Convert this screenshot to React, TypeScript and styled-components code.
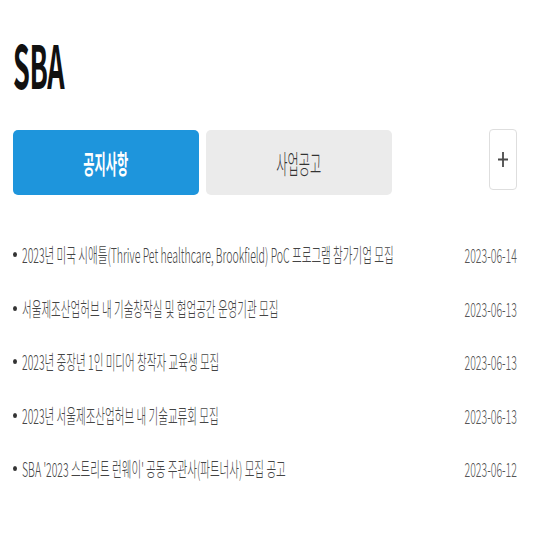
import React from "react";
import styled, { createGlobalStyle } from "styled-components";

const GlobalStyle = createGlobalStyle`
  html, body {
    margin: 0;
    padding: 0;
    background: #ffffff;
    font-family: "Noto Sans CJK KR", "Noto Sans", sans-serif;
  }
`;

const notices = [
  {
    title:
      "2023년 미국 시애틀(Thrive Pet healthcare, Brookfield) PoC 프로그램 참가기업 모집",
    date: "2023-06-14",
  },
  { title: "서울제조산업허브 내 기술창작실 및 협업공간 운영기관 모집", date: "2023-06-13" },
  { title: "2023년 중장년 1인 미디어 창작자 교육생 모집", date: "2023-06-13" },
  { title: "2023년 서울제조산업허브 내 기술교류회 모집", date: "2023-06-13" },
  { title: "SBA '2023 스트리트 런웨이' 공동 주관사(파트너사) 모집 공고", date: "2023-06-12" },
];

const App = () => {
  return (
    <Page>
      <GlobalStyle />
      <Title>
        <Squeeze $scale={0.45}>SBA</Squeeze>
      </Title>
      <TabBar>
        <Tab $active>
          <Squeeze $scale={0.47} $origin="center">공지사항</Squeeze>
        </Tab>
        <Tab>
          <Squeeze $scale={0.47} $origin="center">사업공고</Squeeze>
        </Tab>
        <MoreButton aria-label="더보기">
          <svg width="10" height="15" viewBox="0 0 10 15">
            <path d="M5 0v15M0 7.5h10" stroke="#4a4a4a" strokeWidth="1.8" fill="none" />
          </svg>
        </MoreButton>
      </TabBar>
      <List>
        {notices.map((n) => (
          <Row key={n.title}>
            <Bullet />
            <RowTitle>
              <Squeeze $scale={0.527}>{n.title}</Squeeze>
            </RowTitle>
            <RowDate>
              <Squeeze $scale={0.53} $origin="right">{n.date}</Squeeze>
            </RowDate>
          </Row>
        ))}
      </List>
    </Page>
  );
};

export default App;

const Page = styled.div`
  width: 534px;
  height: 534px;
  box-sizing: border-box;
  padding: 28px 17px 0 13px;
  overflow: hidden;
`;

const Squeeze = styled.span<{ $scale: number; $origin?: string }>`
  display: inline-block;
  white-space: nowrap;
  transform: scaleX(${(p) => p.$scale});
  transform-origin: ${(p) => p.$origin || "left"} center;
`;

const Title = styled.h1`
  margin: 0;
  font-size: 60px;
  line-height: 70px;
  font-weight: 700;
  color: #111;
  letter-spacing: -1px;
`;

const TabBar = styled.div`
  display: flex;
  align-items: flex-start;
  gap: 7px;
  margin-top: 32px;
`;

const Tab = styled.button<{ $active?: boolean }>`
  width: 186px;
  height: 65px;
  border: none;
  border-radius: 5px;
  padding: 0;
  display: flex;
  align-items: center;
  justify-content: center;
  font-family: inherit;
  font-size: 26px;
  font-weight: ${(p) => (p.$active ? 700 : 300)};
  background: ${(p) => (p.$active ? "#1e95dc" : "#ebebeb")};
  color: ${(p) => (p.$active ? "#ffffff" : "#333333")};
`;

const MoreButton = styled.button`
  margin-left: auto;
  margin-top: -1px;
  width: 28px;
  height: 61px;
  padding: 0;
  border: 1px solid #dedede;
  border-radius: 4px;
  background: #fff;
  display: flex;
  align-items: center;
  justify-content: center;
`;

const List = styled.ul`
  list-style: none;
  margin: 33px 0 0;
  padding: 0;
`;

const Row = styled.li`
  height: 53.5px;
  display: flex;
  align-items: center;
  font-size: 20px;
  font-weight: 300;
  color: #444;
`;

const Bullet = styled.span`
  width: 4px;
  height: 5px;
  border-radius: 50%;
  background: #333;
  margin-right: 5px;
  flex-shrink: 0;
`;

const RowTitle = styled.span`
  flex: 1;
  min-width: 0;
`;

const RowDate = styled.span`
  flex-shrink: 0;
  color: #555;
`;
